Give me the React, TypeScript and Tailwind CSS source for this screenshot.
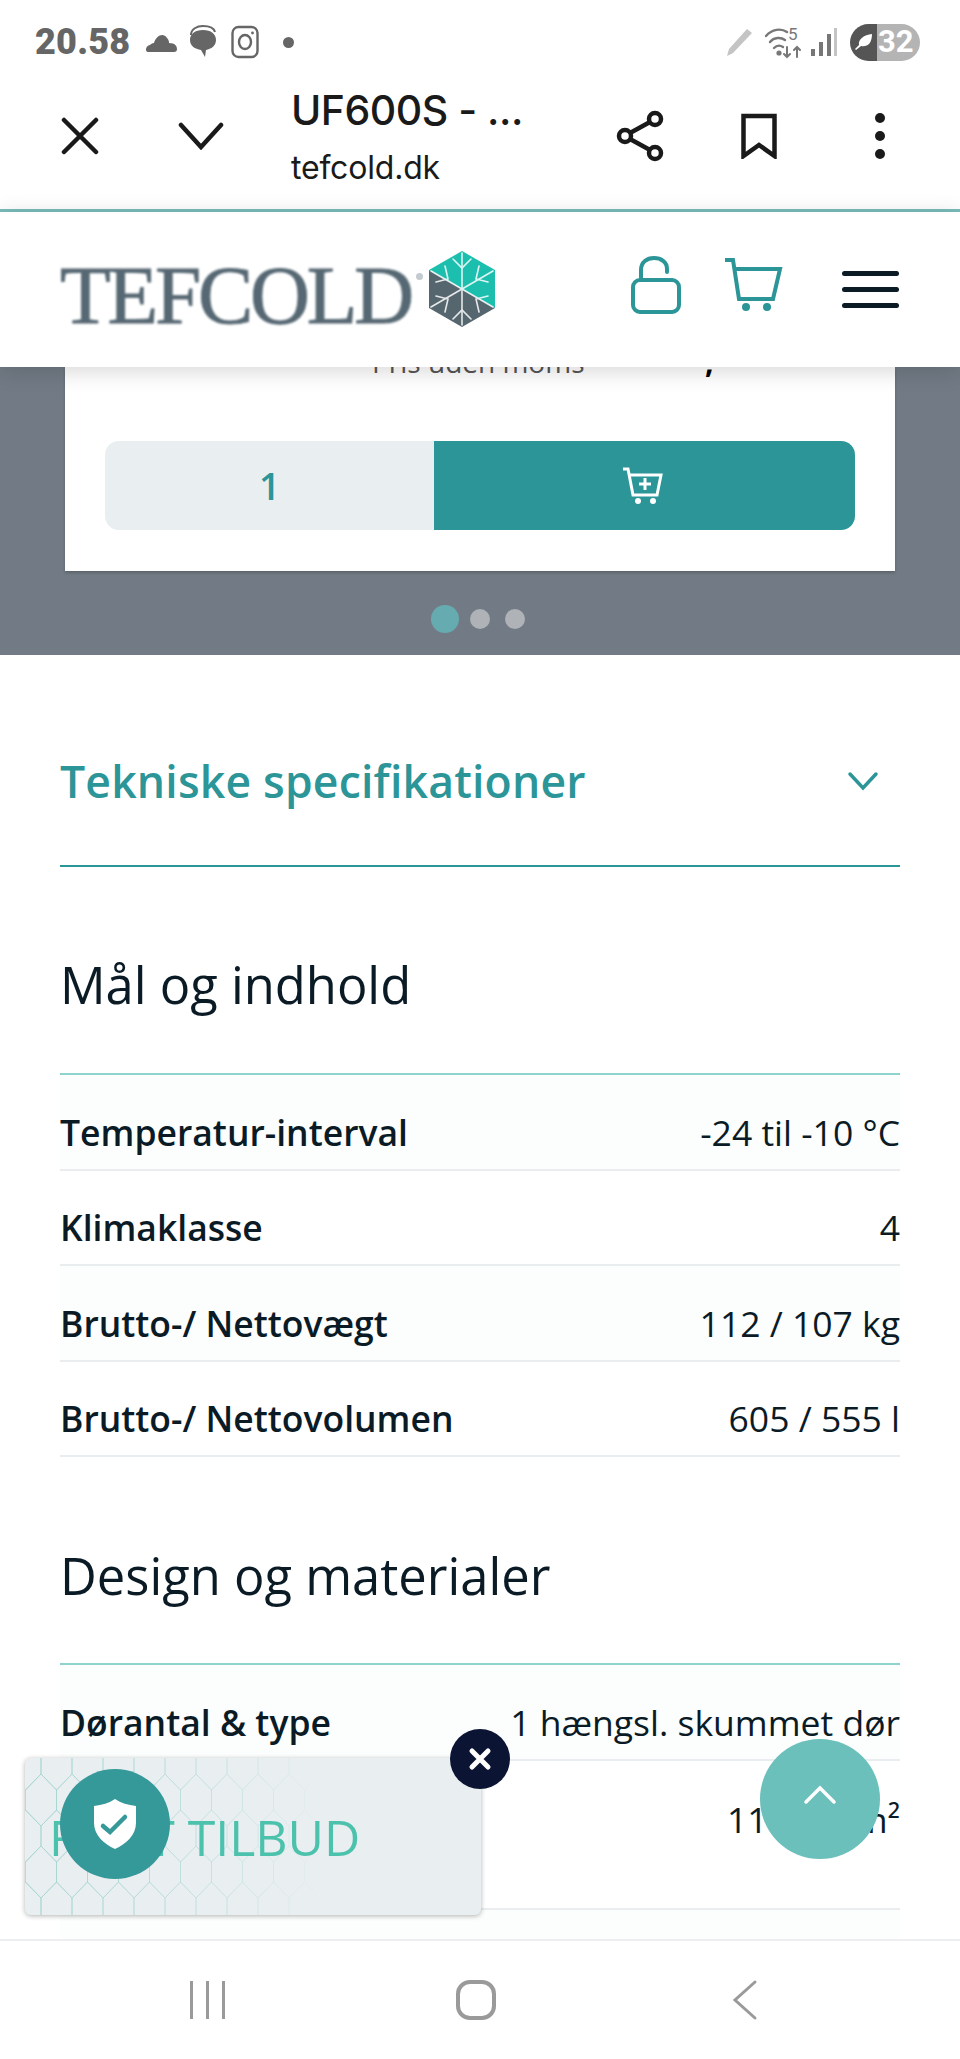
import { useMemo } from "react";

const specsTop = [
  { label: "Temperatur-interval", value: "-24 til -10 °C" },
  { label: "Klimaklasse", value: "4" },
  { label: "Brutto-/ Nettovægt", value: "112 / 107 kg" },
  { label: "Brutto-/ Nettovolumen", value: "605 / 555 l" },
];

function SpecRow({ label, value, tall }: { label: string; value: string; tall?: boolean }) {
  return (
    <div className={`flex items-center justify-between border-b-2 border-[#e9edf0] odd:bg-[#fcfdfd] ${tall ? "h-[149px] pb-[28px]" : "h-[95.5px] pt-[21px]"}`}>
      <span className="text-[35.5px] font-semibold text-[#0b1b26]">{label}</span>
      <span className="text-[35.5px] text-[#0b1b26]">{value}</span>
    </div>
  );
}

// background of the offer card: faint stretched hexagons, fading out to the right
function HexPattern() {
  const cells = useMemo(() => {
    const out: string[] = [];
    const w = 31;
    for (let r = 0; r < 6; r++) {
      for (let c = 0; c < 11; c++) {
        const x = c * w + (r % 2 ? w / 2 : 0) - 15;
        const y = r * 36 + 6;
        out.push(`M${x} ${y - 10}L${x + w / 2} ${y - 26}L${x + w} ${y - 10}V${y + 10}L${x + w / 2} ${y + 26}L${x} ${y + 10}Z`);
      }
    }
    return out;
  }, []);
  return (
    <svg className="absolute inset-0 h-full w-full" viewBox="0 0 456 157">
      <defs>
        <linearGradient id="fade" gradientUnits="userSpaceOnUse" x1="0" x2="300" y1="0" y2="0">
          <stop offset="0" stopColor="#9ed3cf" stopOpacity="0.7" />
          <stop offset="1" stopColor="#9ed3cf" stopOpacity="0" />
        </linearGradient>
      </defs>
      {cells.map((d, i) => (
        <path key={i} d={d} fill="none" stroke="url(#fade)" strokeWidth="1" />
      ))}
    </svg>
  );
}

function Logo() {
  return (
    <div className="flex items-start">
      <span className="mt-[10px] blur-[0.8px] font-['Liberation_Serif',serif] text-[83px] leading-[78px] tracking-[-3.2px] text-[#566873] [-webkit-text-stroke:0.9px_#566873]">TEFCOLD</span>
      <span className="mt-[27px] ml-[5px] h-[7px] w-[7px] rounded-full bg-[#c3cbcf]" />
      <svg className="ml-[6px] mt-[5px] blur-[0.4px]" width="66" height="76" viewBox="0 0 66 76">
        <path d="M0 19L33 0L66 19V57Z" fill="#1cbfae" />
        <path d="M0 19L66 57L33 76L0 57Z" fill="#56666f" />
        <g stroke="#fff" strokeWidth="1.6" fill="none" strokeLinecap="round" opacity="0.85">
          <path d="M33 2V74" />
          <path d="M2 20L64 56" />
          <path d="M64 20L2 56" />
          <path d="M24 8L33 17L42 8" />
          <path d="M24 68L33 59L42 68" />
          <path d="M7 31L19 28L16 15" />
          <path d="M59 31L47 28L50 15" />
          <path d="M7 45L19 48L16 61" />
          <path d="M59 45L47 48L50 61" />
        </g>
      </svg>
    </div>
  );
}

export default function App() {
  return (
    <div className="relative flex h-[2059px] w-[960px] flex-col overflow-hidden bg-white font-['Open_Sans',sans-serif]">
      {/* Android status bar */}
      <div className="flex h-[84px] shrink-0 items-center justify-between pl-[35px] pr-[40px] text-[#666]">
        <div className="flex items-center">
          <span className="font-['Roboto',sans-serif] text-[36px] font-black tracking-[0.2px]">20.58</span>
          <svg className="ml-[15px]" width="32" height="22" viewBox="0 0 32 22" fill="#666">
            <path d="M3 21c-3 0-3-6 2-7 1-1 2-2 4-2 2-7 9-11 13-5 2 2 2 4 2 5 6 0 8 3 8 6 0 2-1 3-3 3Z" />
          </svg>
          <svg className="ml-[12px]" width="28" height="34" viewBox="0 0 28 34">
            <path d="M2 10C2 4 8 1 14 1s11 2 12 6" fill="none" stroke="#666" strokeWidth="2" />
            <path d="M14 5c8 0 13 4 13 10s-5 9-10 10l-1 7-4-7C6 24 1 21 1 15S6 5 14 5Z" fill="#666" />
          </svg>
          <svg className="ml-[14px]" width="28" height="34" viewBox="0 0 28 34" fill="none" stroke="#666" strokeWidth="2.4">
            <rect x="1.5" y="2" width="25" height="30" rx="6" />
            <ellipse cx="14" cy="17" rx="6" ry="7" />
            <circle cx="21.5" cy="8" r="1.4" fill="#666" stroke="none" />
          </svg>
          <span className="ml-[24px] h-[11px] w-[11px] rounded-full bg-[#666]" />
        </div>
        <div className="flex items-center">
          <svg width="28" height="30" viewBox="0 0 28 30" fill="#c4c4c4">
            <path d="M22 2l5 4L8 26l-6 3 2-7Z" />
          </svg>
          <svg className="ml-[12px]" width="38" height="34" viewBox="0 0 38 34" fill="none" stroke="#777" strokeWidth="2.4" strokeLinecap="round">
            <path d="M1 11C7 4 16 3 22 7" />
            <path d="M5 17c4-5 11-5 15-2" />
            <path d="M9 23c3-3 6-3 9-1" />
            <circle cx="14" cy="28" r="1.4" fill="#777" />
            <path d="M22 22v10m-3-3 3 3 3-3" strokeWidth="2" />
            <path d="M32 32V22m-3 3 3-3 3 3" strokeWidth="2" />
            <text x="23" y="15" fontSize="17" fill="#777" stroke="none" fontFamily="Roboto, sans-serif">5</text>
          </svg>
          <svg className="ml-[8px]" width="26" height="30" viewBox="0 0 26 30">
            <rect x="0" y="22" width="4" height="7" fill="#777" />
            <rect x="8" y="15" width="4" height="14" fill="#777" />
            <rect x="16" y="7" width="4" height="22" fill="#777" />
            <rect x="23" y="1" width="3" height="28" fill="#c4c4c4" />
          </svg>
          <div className="ml-[13px] flex h-[37px] w-[70px] overflow-hidden rounded-full">
            <div className="flex w-[27px] items-center justify-center bg-[#555]">
              <svg width="20" height="20" viewBox="0 0 20 20" fill="#fff">
                <path d="M18 2c0 10-5 13-11 12L2 18l-1-1 4-4C4 7 10 3 18 2Z" />
              </svg>
            </div>
            <div className="flex flex-1 items-center bg-[#b4b4b4] pl-[1px] font-['Roboto',sans-serif] text-[31px] font-bold text-white">32</div>
          </div>
        </div>
      </div>

      {/* Custom tab toolbar */}
      <div className="flex h-[125px] shrink-0 items-center pb-[21px] text-[#1a1a1a]">
        <svg className="ml-[61px]" width="38" height="38" viewBox="0 0 38 38" fill="none" stroke="#1a1a1a" strokeWidth="4.5" strokeLinecap="round">
          <path d="M3 3L35 35M35 3L3 35" />
        </svg>
        <svg className="ml-[79px]" width="46" height="28" viewBox="0 0 46 28" fill="none" stroke="#1a1a1a" strokeWidth="4.5" strokeLinecap="round">
          <path d="M3 3L23 25L43 3" />
        </svg>
        <div className="ml-[67px] flex w-[325px] flex-col font-['Inter',sans-serif]">
          <span className="text-[41px] font-medium leading-[50px] tracking-[-0.5px]">UF600S - ...</span>
          <span className="mt-[14px] text-[32px] leading-[38px] tracking-[-0.2px]">tefcold.dk</span>
        </div>
        <svg width="48" height="52" viewBox="0 0 48 52" fill="none" stroke="#1a1a1a" strokeWidth="4.5">
          <circle cx="9" cy="26" r="6" />
          <circle cx="39" cy="9" r="6" />
          <circle cx="39" cy="43" r="6" />
          <path d="M14 23L34 12M14 29L34 40" />
        </svg>
        <svg className="ml-[77px]" width="36" height="46" viewBox="0 0 36 46" fill="none" stroke="#1a1a1a" strokeWidth="4.5">
          <path d="M2.5 43V3H33.5V43L18 32Z" />
        </svg>
        <div className="ml-[98px] flex flex-col gap-[8px]">
          <span className="h-[10px] w-[10px] rounded-full bg-[#1a1a1a]" />
          <span className="h-[10px] w-[10px] rounded-full bg-[#1a1a1a]" />
          <span className="h-[10px] w-[10px] rounded-full bg-[#1a1a1a]" />
        </div>
      </div>
      <div className="h-[3px] shrink-0 bg-[#79bdbb]" />

      {/* Site header */}
      <header className="relative z-10 flex h-[155px] shrink-0 items-center bg-white pl-[60px] pr-[61px] shadow-[0_4px_22px_rgba(0,0,0,0.16)]">
        <Logo />
        <div className="ml-auto flex items-center">
          <svg className="mb-[10px]" width="50" height="58" viewBox="0 0 50 58" fill="none" stroke="#2b9598" strokeWidth="4">
            <rect x="2" y="24" width="46" height="32" rx="7" />
            <path d="M10 24V14C10 6 16 2 23 2s13 4 13 11v3" strokeLinecap="round" />
          </svg>
          <svg className="mb-[10px] ml-[42px]" width="60" height="56" viewBox="0 0 60 56" fill="none" stroke="#2b9598" strokeWidth="4">
            <path d="M2 3H10L16 42H50L57 12H12" />
            <circle cx="23" cy="50" r="4" fill="#2b9598" stroke="none" />
            <circle cx="44" cy="50" r="4" fill="#2b9598" stroke="none" />
          </svg>
          <div className="ml-[59px] flex w-[57px] flex-col gap-[11px]">
            <span className="h-[5px] rounded bg-[#0b1b26]" />
            <span className="h-[5px] rounded bg-[#0b1b26]" />
            <span className="h-[5px] rounded bg-[#0b1b26]" />
          </div>
        </div>
      </header>

      {/* Product slider, scrolled under the header */}
      <section className="flex h-[288px] shrink-0 flex-col items-center overflow-hidden bg-[#727b85]">
        <div className="relative h-[204px] w-[830px] shrink-0 bg-white px-[40px] pt-[74px] shadow-[0_2px_3px_rgba(0,0,0,0.2)]">
          <div className="absolute left-[307px] top-[-26px] text-[28px] text-[#555]">Pris uden moms</div>
          <div className="absolute left-[640px] top-[-28px] text-[30px] font-bold text-black">,</div>
          <div className="flex h-[89px] overflow-hidden rounded-[14px]">
            <div className="flex w-[329px] items-center justify-center bg-[#e9eef1] text-[37px] font-semibold text-[#2b9598]">1</div>
            <div className="flex flex-1 items-center justify-center bg-[#2b9598] pr-[5px]">
              <svg width="42" height="38" viewBox="0 0 42 38" fill="none" stroke="#fff" strokeWidth="3">
                <path d="M2 2H7L12 28H36L40 8H8" />
                <path d="M24 11V23M18 17H30" />
                <circle cx="17" cy="34" r="3" fill="#fff" stroke="none" />
                <circle cx="32" cy="34" r="3" fill="#fff" stroke="none" />
              </svg>
            </div>
          </div>
        </div>
        <div className="mt-[34px] flex items-center pr-[4px]">
          <span className="h-[28px] w-[28px] rounded-full bg-[#66abb0]" />
          <span className="ml-[11px] h-[20px] w-[20px] rounded-full bg-[#afb2b6]" />
          <span className="ml-[15px] h-[20px] w-[20px] rounded-full bg-[#afb2b6]" />
        </div>
      </section>

      {/* Specs */}
      <main className="flex-1 overflow-hidden px-[60px]">
        <div className="flex h-[212px] items-center justify-between border-b-2 border-[#2b9598] pt-[42px]">
          <h2 className="text-[44.5px] font-semibold tracking-[0.2px] text-[#2b9598]">Tekniske specifikationer</h2>
          <svg className="mr-[21px]" width="32" height="20" viewBox="0 0 32 20" fill="none" stroke="#2b9598" strokeWidth="3.5" strokeLinecap="round">
            <path d="M3 3L16 17L29 3" />
          </svg>
        </div>
        <h3 className="mt-[83px] h-[125px] border-b-2 border-[#8fd3ce] text-[50.7px] leading-[70px] text-[#0b1b26]">Mål og indhold</h3>
        <div>
          {specsTop.map((row) => (
            <SpecRow key={row.label} label={row.label} value={row.value} />
          ))}
        </div>
        <h3 className="mt-[85px] h-[123px] border-b-2 border-[#8fd3ce] text-[50.7px] leading-[68px] text-[#0b1b26]">Design og materialer</h3>
        <div>
          <SpecRow label="Dørantal & type" value="1 hængsl. skummet dør" />
          <SpecRow tall label="" value="11900 cm²" />
          <SpecRow label="" value="" />
        </div>
      </main>

      {/* Android nav bar */}
      <nav className="relative flex h-[120px] shrink-0 items-center border-t-2 border-[#eceef0] bg-white">
        <div className="ml-[190px] flex gap-[13px]">
          <span className="h-[38px] w-[3px] bg-[#9a9a9a]" />
          <span className="h-[38px] w-[3px] bg-[#9a9a9a]" />
          <span className="h-[38px] w-[3px] bg-[#9a9a9a]" />
        </div>
        <span className="ml-[231px] h-[40px] w-[40px] rounded-[14px] border-[4px] border-[#9a9a9a]" />
        <svg className="ml-[235px]" width="28" height="42" viewBox="0 0 28 42" fill="none" stroke="#9a9a9a" strokeWidth="3" strokeLinecap="round">
          <path d="M24 3L4 21L24 39" />
        </svg>
      </nav>

      {/* Floating offer card */}
      <div className="absolute left-[25px] top-[1758px] h-[157px] w-[456px] overflow-hidden rounded-[6px] bg-[#e9eef1] shadow-[0_1px_5px_rgba(0,0,0,0.3)]">
        <HexPattern />
        <span className="absolute left-[24px] top-[42px] whitespace-nowrap text-[50px] text-[#4cc2ad]">FÅ ET TILBUD</span>
      </div>
      <div className="absolute left-[60px] top-[1769px] flex h-[110px] w-[110px] items-center justify-center rounded-full bg-[#359899]">
        <svg width="44" height="50" viewBox="0 0 44 50">
          <path d="M22 0C28 4 35 6 43 7V24C43 36 33 45 22 50C11 45 1 36 1 24V7C9 6 16 4 22 0Z" fill="#fff" />
          <path d="M10 27L17 33L32 18" fill="none" stroke="#359899" strokeWidth="4.5" strokeLinecap="round" />
        </svg>
      </div>
      <div className="absolute left-[450px] top-[1729px] flex h-[60px] w-[60px] items-center justify-center rounded-full bg-[#0b1433]">
        <svg width="24" height="24" viewBox="0 0 24 24" fill="none" stroke="#fff" strokeWidth="5" strokeLinecap="round">
          <path d="M4 4L20 20M20 4L4 20" />
        </svg>
      </div>
      <div className="absolute left-[760px] top-[1739px] flex h-[120px] w-[120px] items-center justify-center rounded-full bg-[#6cc0bb]">
        <svg className="mb-[8px]" width="34" height="20" viewBox="0 0 34 20" fill="none" stroke="#fff" strokeWidth="3.5" strokeLinecap="round">
          <path d="M3 17L17 3L31 17" />
        </svg>
      </div>
    </div>
  );
}
